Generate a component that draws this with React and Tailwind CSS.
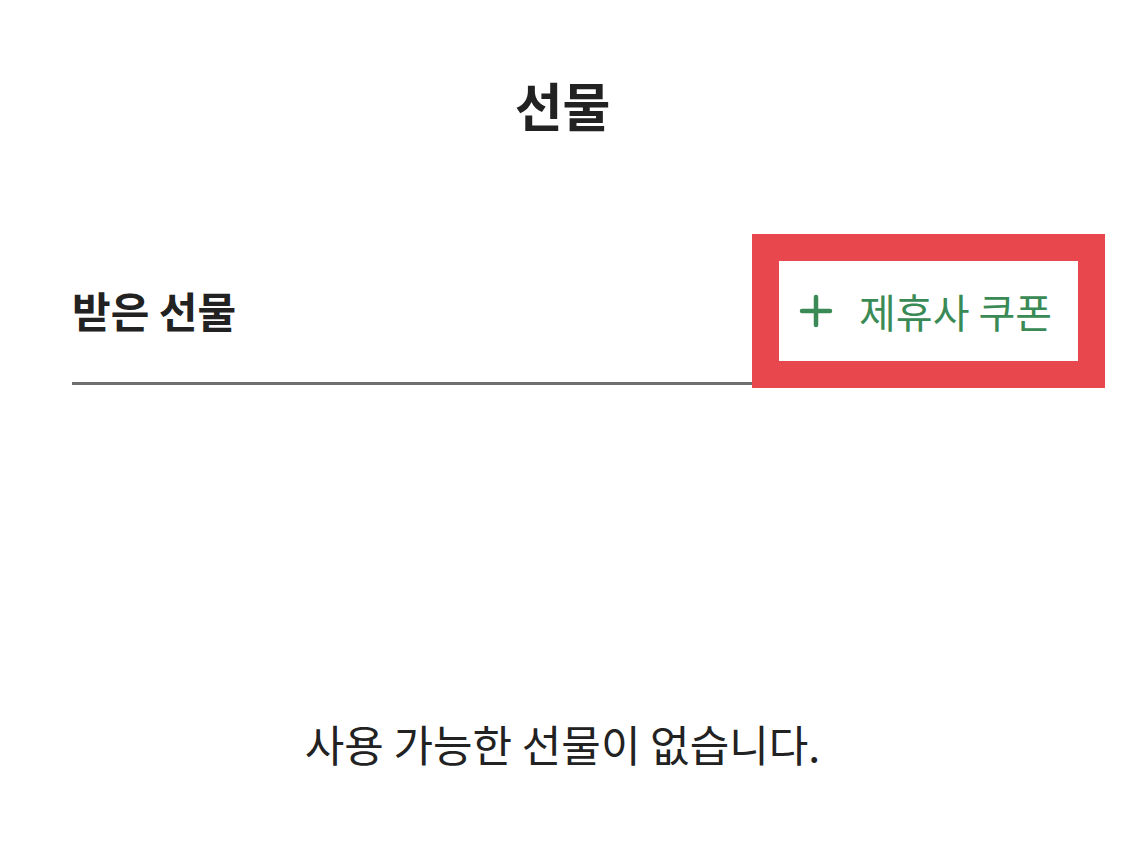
export default function App() {
  return (
    <div className="min-h-[851px] bg-white text-[#222222] [font-family:'Noto_Sans_CJK_KR','Noto_Sans',sans-serif]">
      <h1 className="pt-[73px] text-center text-[52px] font-bold leading-[64px]">선물</h1>

      <div className="mx-[72px] mt-[100px] flex h-[148px] items-center justify-between border-b-[3px] border-[#6f6f6f]">
        <h2 className="text-[42px] font-bold leading-none">받은 선물</h2>
        <button className="relative -mr-[25px] mb-[21px] flex h-[100px] items-center gap-[26px] self-end bg-white pl-[20px] pr-[26px] text-[#3a8a55]">
          <svg width="34" height="34" viewBox="0 0 34 34" fill="none" stroke="currentColor" strokeWidth="4.5" strokeLinecap="round">
            <path d="M17 3v28M3 17h28" />
          </svg>
          <span className="text-[40px] leading-none">제휴사 쿠폰</span>
          <span className="pointer-events-none absolute -inset-[27px] border-[27px] border-[#e8474d]" />
        </button>
      </div>

      <p className="mt-[333px] text-center text-[43px] leading-[50px]">사용 가능한 선물이 없습니다.</p>
    </div>
  )
}
